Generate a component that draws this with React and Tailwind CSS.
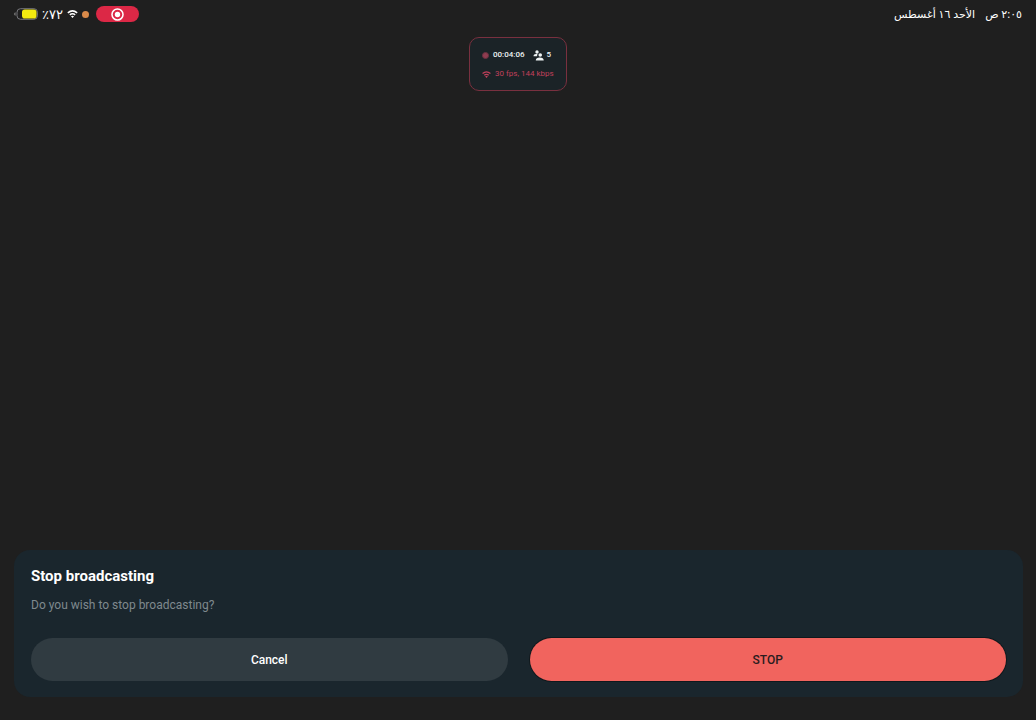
import React, {useState} from 'react';

const WifiIcon = ({ className }) => (
  <svg className={className} viewBox="0 0 24 18" fill="none" stroke="currentColor">
    <path d="M1.500 6.500C8 .8 16 .8 22.500 6.500" strokeWidth="3.400" />
    <path d="M6 11c3.500-3 8.500-3 12 0" strokeWidth="3.200" />
    <path d="M12 18l-3.500-3.800c2.200-1.600 4.800-1.600 7 0z" fill="currentColor" stroke="none" />
  </svg>
);

const BatteryIcon = () => (
  <svg className="w-6 h-3" viewBox="0 0 24 12" fill="none">
    <path d="M1.500 4.200v3.600C.7 7.500.2 6.800.2 6s.5-1.500 1.300-1.800z" fill="#8a8a8a" />
    <rect x="3" y="0.700" width="20.400" height="10.600" rx="3.500" stroke="#77777c" strokeWidth="1" />
    <rect x="8" y="1.500" width="14.500" height="9" rx="2.800" fill="#f3ea10" />
  </svg>
);

const ViewersIcon = () => (
  <svg className="w-[11px] h-[11px]" viewBox="0 0 22 22" fill="currentColor">
    <circle cx="8" cy="4" r="3.400" />
    <path d="M1 12.500c0-3 2-4.500 5-4.500 1.300 0 2.300.3 3.200 1-.9 1-1.200 2.300-1 3.500z" />
    <circle cx="14.500" cy="10" r="3.600" />
    <path d="M5.500 21c0-3.700 3-5.800 8-5.800s8 2.100 8 5.800z" />
  </svg>
);

const StatusBar = () => (
  <header className="flex items-center justify-between h-7 px-[14px] font-['Noto_Sans','DejaVu_Sans',sans-serif] text-white">
    <div className="flex items-center">
      <BatteryIcon />
      <span dir="rtl" className="ml-1 text-[13px] leading-4">٧٢٪</span>
      <WifiIcon className="w-[11px] h-2 ml-1" />
      <span className="w-[7px] h-[7px] ml-1 rounded-full bg-[#d98a4a]" />
      <button
        aria-label="Screen recording"
        className="flex items-center justify-center w-[43px] h-4 ml-[7px] rounded-full bg-[#dc2846]"
      >
        <svg className="w-[13px] h-[13px]" viewBox="0 0 24 24" fill="none">
          <circle cx="12" cy="12" r="10.200" stroke="white" strokeWidth="2.800" />
          <circle cx="12" cy="12" r="5" fill="white" />
        </svg>
      </button>
    </div>
    <div dir="rtl" className="flex items-center gap-[10px] text-[11px] leading-4">
      <span>٢:٠٥ ص</span>
      <span>الأحد ١٦ أغسطس</span>
    </div>
  </header>
);

const StreamStats = () => (
  <section className="flex flex-col gap-[7px] w-[98px] mt-[9px] mx-auto pl-3 pt-[11px] pb-[10px] rounded-[10px] border border-[#79303f] bg-[#1b2327] text-[8px] leading-3 font-medium">
    <div className="flex items-center h-3 text-[#eef3f4]">
      <span className="w-[7px] h-[7px] rounded-full border border-[#6b3040] bg-[#8f3c50]" />
      <span className="ml-1">00:04:06</span>
      <span className="flex items-center gap-[3px] ml-2">
        <ViewersIcon />
        5
      </span>
    </div>
    <div className="flex items-center h-3 gap-1 text-[#c0405b]">
      <WifiIcon className="w-[9px] h-[7px] shrink-0" />
      <span className="whitespace-nowrap font-normal">30 fps, 144 kbps</span>
    </div>
  </section>
);

const StopDialog = ({ onCancel, onStop }) => (
  <section
    role="dialog"
    aria-labelledby="stop-title"
    aria-describedby="stop-text"
    className="mt-auto ml-[14px] mr-[13px] mb-[23px] px-[17px] py-4 rounded-2xl bg-[#1a262d]"
  >
    <h1 id="stop-title" className="text-[15px] leading-5 font-bold text-white">Stop broadcasting</h1>
    <p id="stop-text" className="mt-[11px] text-xs leading-4 text-[#7f898e]">Do you wish to stop broadcasting?</p>
    <div className="grid grid-cols-2 gap-[22px] mt-[25px]">
      <button onClick={onCancel} className="h-[43px] rounded-full bg-[#303b41] text-xs font-medium text-white">
        Cancel
      </button>
      <button onClick={onStop} className="h-[43px] rounded-full ring-1 ring-[#10181c] bg-[#f1645e] text-xs font-medium text-[#2a1c20]">
        STOP
      </button>
    </div>
  </section>
);

const App = () => {
  const [open, setOpen] = useState(true);

  return (
    <main className="flex flex-col min-h-screen bg-[#1f1f1f] font-[Roboto,sans-serif]">
      <StatusBar />
      <StreamStats />
      {open && <StopDialog onCancel={() => setOpen(false)} onStop={() => setOpen(false)} />}
    </main>
  );
};

export default App;
